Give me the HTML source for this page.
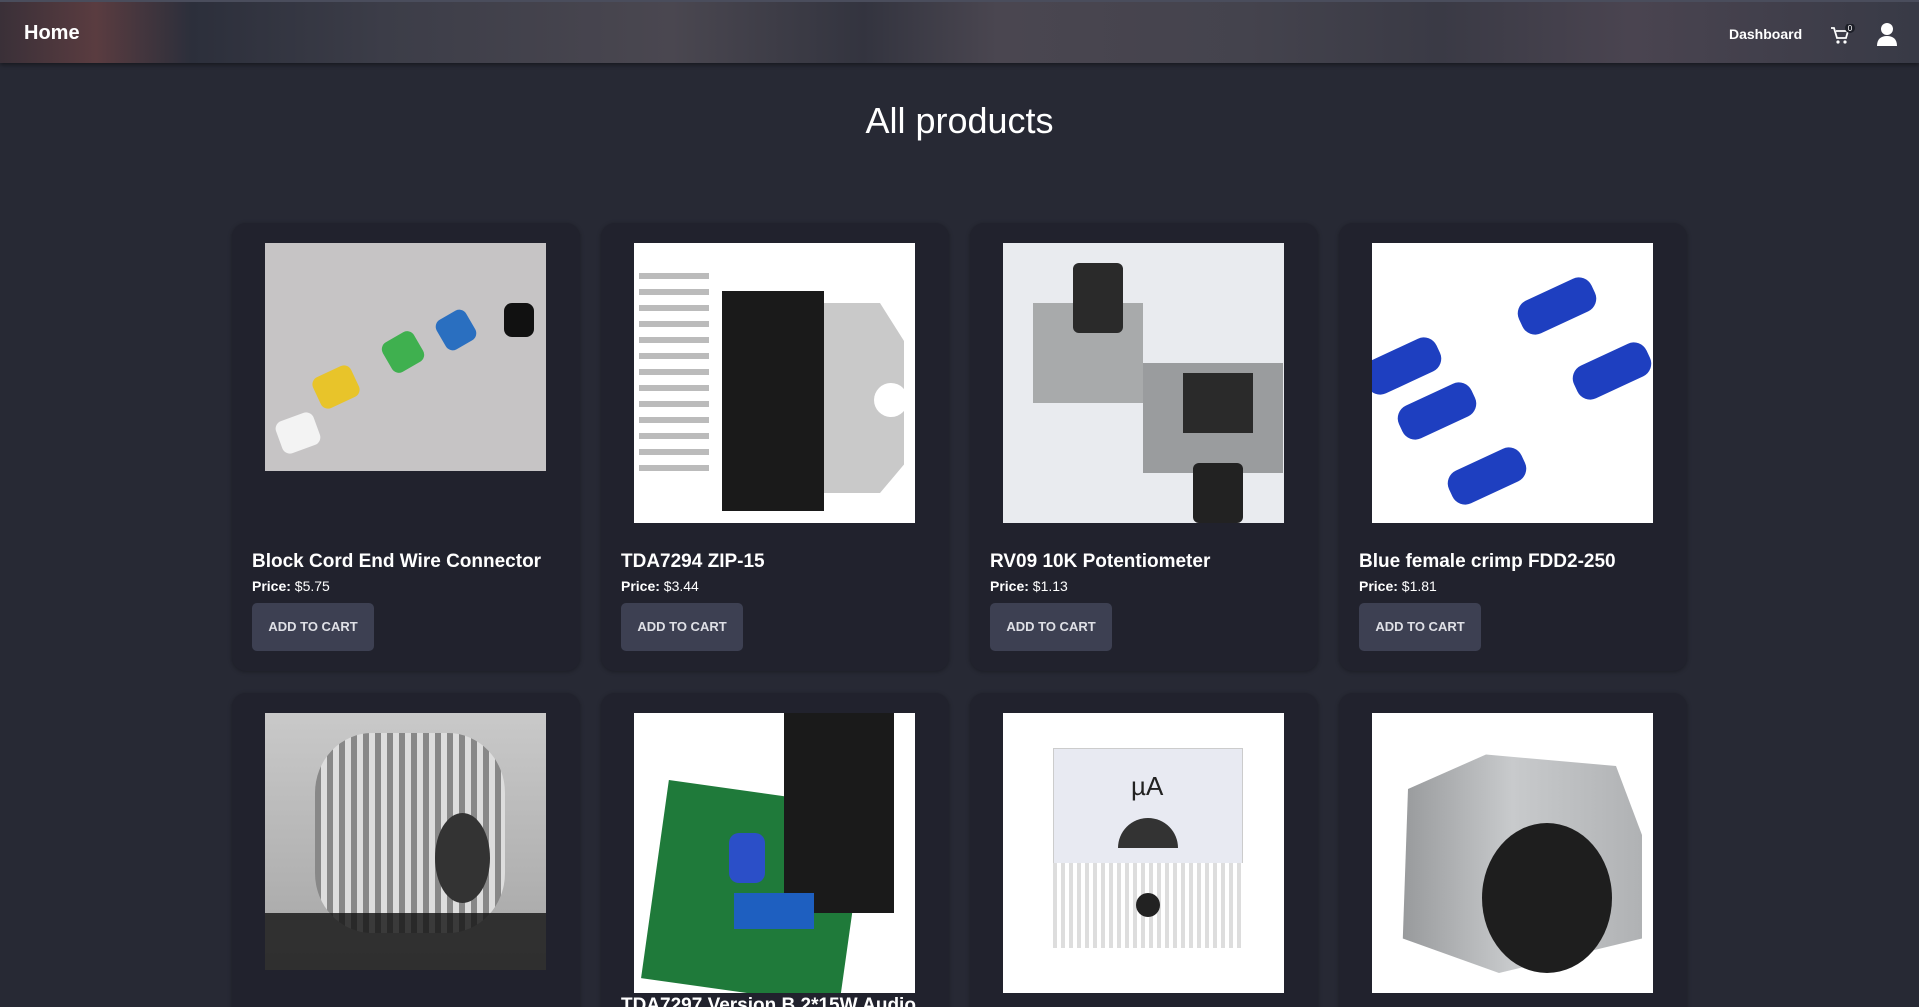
<!DOCTYPE html>
<html style="overflow:hidden;height:1007px"><head><meta charset="utf-8"><style>
*{margin:0;padding:0;box-sizing:border-box}
body{width:1919px;height:1007px;overflow:hidden;background:#272934;font-family:"Liberation Sans",sans-serif;color:#fff;position:relative}
.hdr{position:absolute;left:0;top:0;width:1919px;height:63px;border-top:2px solid #4a4d5c;
background:linear-gradient(90deg,#3a3038 0%,#5a3c40 5%,#2c2f3b 10%,#3c3d48 20%,#4a4750 35%,#33343f 45%,#4a4650 52%,#44434d 65%,#3a3a45 75%,#4a4450 85%,#383a46 100%);box-shadow:0 2px 4px rgba(0,0,0,.4)}
.home{position:absolute;left:24px;top:20px;font-size:20px;font-weight:bold}
.dash{position:absolute;left:1729px;top:24px;font-size:14px;font-weight:bold}
h1{position:absolute;left:0;width:1919px;text-align:center;top:100px;font-size:36px;font-weight:normal}
.card{position:absolute;width:348px;height:448px;background:#21222d;border-radius:14px;box-shadow:0 1px 4px rgba(0,0,0,.3);overflow:hidden}
.r2{height:330px;border-radius:14px 14px 0 0}
.img{position:absolute;left:33px;top:20px;width:281px;height:280px;background:#fff;overflow:hidden}
.t{position:absolute;left:20px;top:328px;font-size:19px;font-weight:bold;white-space:nowrap}
.p{position:absolute;left:20px;top:355px;font-size:14px}
.b{position:absolute;left:20px;top:380px;width:122px;height:48px;background:#3d4052;border-radius:5px;font-size:13px;font-weight:bold;color:#dfe0e6;text-align:center;line-height:48px}
</style></head><body>
<div class="hdr">
<div class="home">Home</div>
<div class="dash">Dashboard</div>
<svg style="position:absolute;left:1830px;top:22px" width="26" height="24" viewBox="0 0 26 24"><path d="M1 4h3l3 10h9l2-7H6" fill="none" stroke="#fff" stroke-width="1.8"/><circle cx="8" cy="18" r="1.6" fill="#fff"/><circle cx="15" cy="18" r="1.6" fill="#fff"/><circle cx="20" cy="4" r="5" fill="#1d1f28"/><text x="20" y="7" font-size="8" fill="#fff" text-anchor="middle" font-family="Liberation Sans">0</text></svg>
<svg style="position:absolute;left:1877px;top:20px" width="20" height="26" viewBox="0 0 20 26"><circle cx="10" cy="7" r="6" fill="#fff"/><path d="M0 24c0-7 4-10 10-10s10 3 10 10z" fill="#fff"/></svg>
</div>
<h1>All products</h1>

<div class="card" style="left:232px;top:223px"><div class="img" style="height:228px;background:#c6c4c5">
<div style="position:absolute;left:13px;top:173px;width:40px;height:34px;background:#f3f3f3;border-radius:8px;transform:rotate(-20deg)"></div>
<div style="position:absolute;left:50px;top:127px;width:42px;height:34px;background:#e8c42a;border-radius:8px;transform:rotate(-25deg)"></div>
<div style="position:absolute;left:120px;top:92px;width:36px;height:34px;background:#3fb04f;border-radius:8px;transform:rotate(-30deg)"></div>
<div style="position:absolute;left:174px;top:70px;width:34px;height:34px;background:#2a6fc0;border-radius:8px;transform:rotate(-30deg)"></div>
<div style="position:absolute;left:239px;top:60px;width:30px;height:34px;background:#111;border-radius:8px"></div>
</div><div class="t">Block Cord End Wire Connector</div><div class="p"><b>Price:</b> $5.75</div><div class="b">ADD TO CART</div></div>

<div class="card" style="left:601px;top:223px"><div class="img">
<div style="position:absolute;left:5px;top:30px;width:70px;height:200px;background:repeating-linear-gradient(#bbb 0 6px,#fff 6px 16px)"></div>
<div style="position:absolute;left:150px;top:60px;width:120px;height:190px;background:#c9c9c9;clip-path:polygon(0 0,80% 0,100% 20%,100% 85%,80% 100%,0 100%)"></div>
<div style="position:absolute;left:240px;top:140px;width:34px;height:34px;background:#fff;border-radius:50%"></div>
<div style="position:absolute;left:88px;top:48px;width:102px;height:220px;background:#1a1a1a"></div>
</div><div class="t">TDA7294 ZIP-15</div><div class="p"><b>Price:</b> $3.44</div><div class="b">ADD TO CART</div></div>

<div class="card" style="left:970px;top:223px"><div class="img" style="background:#e9ebef">
<div style="position:absolute;left:30px;top:60px;width:110px;height:100px;background:#a8aaab"></div>
<div style="position:absolute;left:70px;top:20px;width:50px;height:70px;background:#2a2a2a;border-radius:6px"></div>
<div style="position:absolute;left:140px;top:120px;width:140px;height:110px;background:#9a9c9e"></div>
<div style="position:absolute;left:180px;top:130px;width:70px;height:60px;background:#2a2a2a"></div>
<div style="position:absolute;left:190px;top:220px;width:50px;height:60px;background:#222;border-radius:6px"></div>
</div><div class="t">RV09 10K Potentiometer</div><div class="p"><b>Price:</b> $1.13</div><div class="b">ADD TO CART</div></div>

<div class="card" style="left:1339px;top:223px"><div class="img">
<div style="position:absolute;left:145px;top:45px;width:80px;height:36px;background:#1e3fc0;border-radius:14px;transform:rotate(-25deg)"></div>
<div style="position:absolute;left:-10px;top:105px;width:80px;height:36px;background:#1e3fc0;border-radius:14px;transform:rotate(-25deg)"></div>
<div style="position:absolute;left:25px;top:150px;width:80px;height:36px;background:#1e3fc0;border-radius:14px;transform:rotate(-25deg)"></div>
<div style="position:absolute;left:200px;top:110px;width:80px;height:36px;background:#1e3fc0;border-radius:14px;transform:rotate(-25deg)"></div>
<div style="position:absolute;left:75px;top:215px;width:80px;height:36px;background:#1e3fc0;border-radius:14px;transform:rotate(-25deg)"></div>
</div><div class="t">Blue female crimp FDD2-250</div><div class="p"><b>Price:</b> $1.81</div><div class="b">ADD TO CART</div></div>

<div class="card r2" style="left:232px;top:693px"><div class="img" style="height:257px;background:linear-gradient(#c9c9c9,#a5a5a5)">
<div style="position:absolute;left:50px;top:20px;width:190px;height:200px;background:repeating-linear-gradient(90deg,#888 0 6px,#ddd 6px 12px);border-radius:30%"></div>
<div style="position:absolute;left:170px;top:100px;width:55px;height:90px;background:#333;border-radius:50%"></div>
<div style="position:absolute;left:0;top:200px;width:281px;height:60px;background:#111;opacity:.8"></div>
</div></div>

<div class="card r2" style="left:601px;top:693px"><div class="img">
<div style="position:absolute;left:20px;top:80px;width:200px;height:200px;background:#1f7a3a;transform:rotate(8deg)"></div>
<div style="position:absolute;left:150px;top:0;width:110px;height:200px;background:#1a1a1a"></div>
<div style="position:absolute;left:100px;top:180px;width:80px;height:36px;background:#1e5fc0"></div>
<div style="position:absolute;left:95px;top:120px;width:36px;height:50px;background:#2b4fc8;border-radius:10px"></div>
</div><div class="t" style="top:302px">TDA7297 Version B 2*15W Audio</div></div>

<div class="card r2" style="left:970px;top:693px"><div class="img">
<div style="position:absolute;left:50px;top:35px;width:190px;height:150px;background:#e8eaf2;border:1px solid #ccc"></div>
<div style="position:absolute;left:50px;top:150px;width:190px;height:85px;background:repeating-linear-gradient(90deg,#ddd 0 4px,#fff 4px 8px)"></div>
<div style="position:absolute;left:115px;top:105px;width:60px;height:30px;background:#333;border-radius:30px 30px 0 0"></div>
<div style="position:absolute;left:128px;top:58px;font-size:26px;color:#222">µA</div>
<div style="position:absolute;left:133px;top:180px;width:24px;height:24px;background:#222;border-radius:50%"></div>
</div></div>

<div class="card r2" style="left:1339px;top:693px"><div class="img">
<div style="position:absolute;left:10px;top:30px;width:260px;height:230px;background:linear-gradient(90deg,#8f9193,#c8cacc 50%,#b0b2b4);clip-path:polygon(10% 20%,40% 5%,90% 10%,100% 40%,100% 85%,45% 100%,8% 85%)"></div>
<div style="position:absolute;left:110px;top:110px;width:130px;height:150px;background:#1e1e1e;border-radius:50%"></div>
</div></div>
</body></html>
